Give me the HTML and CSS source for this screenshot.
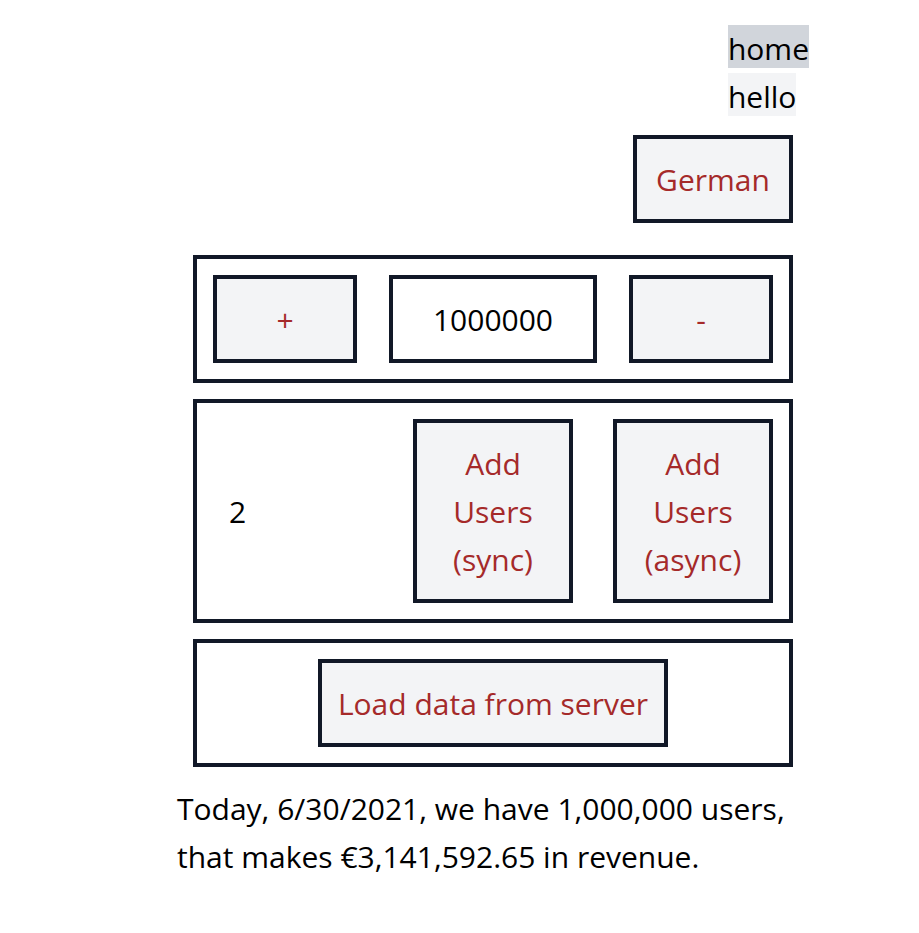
FILE: index.html
```html
<!DOCTYPE html>
<html lang="en">
<head>
<meta charset="utf-8">
<meta name="viewport" content="width=device-width, initial-scale=1">
<title>Home</title>
<link rel="stylesheet" href="styles.css">
</head>
<body>
<main class="page">
  <nav class="nav">
    <a class="nav-link active" href="#home">home</a>
    <a class="nav-link" href="#hello">hello</a>
  </nav>
  <div class="language">
    <button class="button" type="button">German</button>
  </div>
  <section class="panel counter">
    <button class="button" type="button">+</button>
    <output class="value">1000000</output>
    <button class="button" type="button">-</button>
  </section>
  <section class="panel users">
    <span class="count">2</span>
    <button class="button" type="button">Add Users (sync)</button>
    <button class="button" type="button">Add Users (async)</button>
  </section>
  <section class="panel server">
    <button class="button" type="button">Load data from server</button>
  </section>
  <p class="summary">Today, 6/30/2021, we have 1,000,000 users, that makes €3,141,592.65 in revenue.</p>
</main>
</body>
</html>
```
FILE: styles.css
```css
* {
  box-sizing: border-box;
}

body {
  margin: 0;
  padding-left: 67px;
  background: #fff;
  color: #000;
  font-family: "Segoe UI", "Open Sans", "Noto Sans", sans-serif;
  font-size: 30px;
  line-height: 48px;
}

.page {
  width: 90%;
  max-width: 632px;
  margin: 0 auto;
  padding: 25px 0;
}

.nav {
  display: grid;
  justify-content: end;
  justify-items: start;
}

.nav-link {
  height: 43px;
  margin-bottom: 5px;
  background: #f3f4f6;
  color: inherit;
  text-decoration: none;
}

.nav-link.active {
  background: #d1d5db;
}

.language {
  display: flex;
  justify-content: flex-end;
  margin: 14px 16px 32px;
}

.button,
.value {
  border: 4px solid #111827;
  padding: 17px 16px 15px;
  text-align: center;
}

.button {
  background: #f3f4f6;
  color: #a52a2a;
  font: inherit;
}

.language .button {
  width: 160px;
}

.panel {
  display: grid;
  margin: 16px;
  border: 4px solid #111827;
  padding: 16px;
}

.counter {
  grid-template-columns: 144px 1fr 144px;
  gap: 32px;
}

.users {
  grid-template-columns: 1fr 160px 160px;
  gap: 40px;
  align-items: center;
}

.count {
  padding: 2px 0 0 16px;
}

.server {
  justify-content: center;
}

.summary {
  margin: 18px 0 0;
}
```
